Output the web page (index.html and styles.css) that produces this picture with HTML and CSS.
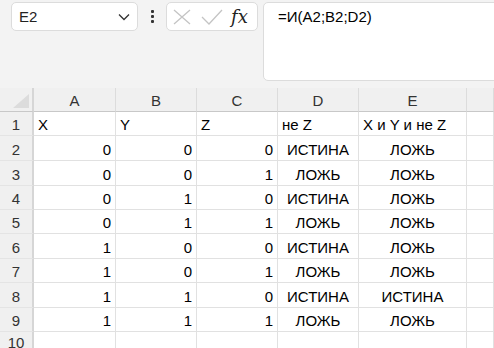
FILE: index.html
```html
<!DOCTYPE html>
<html lang="ru">
  <head>
    <meta charset="UTF-8" />
    <meta name="viewport" content="width=device-width, initial-scale=1.0" />
    <title>Sheet</title>
    <link rel="stylesheet" href="styles.css">
  </head>
  <body>
    <div id="formula-bar">
      <div class="name-box">
        <span>E2</span>
        <svg class="chevron" width="12" height="8" viewBox="0 0 12 8">
          <path d="M1 1.5 L6 6.5 L11 1.5" fill="none" stroke="#333" stroke-width="1.3" />
        </svg>
      </div>
      <div class="kebab"><i></i><i></i><i></i></div>
      <div class="fx-box">
        <svg width="18" height="16" viewBox="0 0 18 16">
          <path d="M1 1 L17 15 M17 1 L1 15" stroke="#c4c4c4" stroke-width="1.3" fill="none" />
        </svg>
        <svg width="22" height="16" viewBox="0 0 22 16">
          <path d="M1 8 L8 15 L21 1" stroke="#c4c4c4" stroke-width="1.3" fill="none" />
        </svg>
        <span class="fx">fx</span>
      </div>
      <div class="formula">=И(A2;B2;D2)</div>
    </div>

    <div id="sheet">
      <div class="corner"><span class="triangle"></span></div>
      <div class="col-head">A</div>
      <div class="col-head">B</div>
      <div class="col-head">C</div>
      <div class="col-head">D</div>
      <div class="col-head">E</div>
      <div class="col-head"></div>

      <div class="row-head">1</div>
      <div class="cell">X</div><div class="cell">Y</div><div class="cell">Z</div>
      <div class="cell">не Z</div><div class="cell">X и Y и не Z</div><div class="cell"></div>

      <div class="row-head">2</div>
      <div class="cell num">0</div><div class="cell num">0</div><div class="cell num">0</div>
      <div class="cell bool">ИСТИНА</div><div class="cell bool">ЛОЖЬ</div><div class="cell"></div>

      <div class="row-head">3</div>
      <div class="cell num">0</div><div class="cell num">0</div><div class="cell num">1</div>
      <div class="cell bool">ЛОЖЬ</div><div class="cell bool">ЛОЖЬ</div><div class="cell"></div>

      <div class="row-head">4</div>
      <div class="cell num">0</div><div class="cell num">1</div><div class="cell num">0</div>
      <div class="cell bool">ИСТИНА</div><div class="cell bool">ЛОЖЬ</div><div class="cell"></div>

      <div class="row-head">5</div>
      <div class="cell num">0</div><div class="cell num">1</div><div class="cell num">1</div>
      <div class="cell bool">ЛОЖЬ</div><div class="cell bool">ЛОЖЬ</div><div class="cell"></div>

      <div class="row-head">6</div>
      <div class="cell num">1</div><div class="cell num">0</div><div class="cell num">0</div>
      <div class="cell bool">ИСТИНА</div><div class="cell bool">ЛОЖЬ</div><div class="cell"></div>

      <div class="row-head">7</div>
      <div class="cell num">1</div><div class="cell num">0</div><div class="cell num">1</div>
      <div class="cell bool">ЛОЖЬ</div><div class="cell bool">ЛОЖЬ</div><div class="cell"></div>

      <div class="row-head">8</div>
      <div class="cell num">1</div><div class="cell num">1</div><div class="cell num">0</div>
      <div class="cell bool">ИСТИНА</div><div class="cell bool">ИСТИНА</div><div class="cell"></div>

      <div class="row-head">9</div>
      <div class="cell num">1</div><div class="cell num">1</div><div class="cell num">1</div>
      <div class="cell bool">ЛОЖЬ</div><div class="cell bool">ЛОЖЬ</div><div class="cell"></div>

      <div class="row-head">10</div>
      <div class="cell"></div><div class="cell"></div><div class="cell"></div>
      <div class="cell"></div><div class="cell"></div><div class="cell"></div>
    </div>
  </body>
</html>
```

FILE: styles.css
```css
* {
  margin: 0;
  padding: 0;
  box-sizing: border-box;
}

:root {
  --bg: #f3f3f3;
  --head-bg: #f0f0f0;
  --grid: #e1e1e1;
  --box-border: #dcdcdc;
}

body {
  width: 494px;
  height: 348px;
  overflow: hidden;
  background-color: var(--bg);
  font-family: "Liberation Sans", Arial, sans-serif;
  font-size: 15px;
  color: #000;
}

/* formula bar */
#formula-bar {
  display: flex;
  align-items: flex-start;
  height: 88px;
  padding-top: 2px;
}

.name-box {
  display: flex;
  align-items: center;
  justify-content: space-between;
  width: 127px;
  height: 29px;
  margin-left: 11px;
  padding: 0 7px 0 7px;
  background-color: #fff;
  border: 1px solid var(--box-border);
  border-radius: 5px;
  color: #222;
}

.kebab {
  display: flex;
  flex-direction: column;
  gap: 2px;
  width: 28px;
  height: 29px;
  align-items: center;
  justify-content: center;
}

.kebab i {
  display: block;
  width: 3px;
  height: 3px;
  border-radius: 1px;
  background-color: #333;
}

.fx-box {
  display: flex;
  align-items: center;
  gap: 10px;
  width: 92px;
  height: 29px;
  padding-left: 6px;
  background-color: #fff;
  border: 1px solid var(--box-border);
  border-radius: 5px;
}

.fx {
  font-family: "DejaVu Serif", "Liberation Serif", serif;
  font-style: italic;
  font-size: 18px;
  color: #222;
  margin-left: -2px;
}

.formula {
  flex: 1;
  height: 79px;
  margin-left: 5px;
  margin-right: -10px;
  padding: 5px 0 0 14px;
  background-color: #fff;
  border: 1px solid var(--box-border);
  border-radius: 5px;
}

/* sheet */
#sheet {
  display: grid;
  grid-template-columns: 34px 82px 81px 81px 81px 108px 1fr;
  grid-template-rows: 24px 24px 25px 25px 24px 24px 25px 24px 25px 24px 1fr;
  height: 260px;
  background-color: #fff;
}

.corner {
  position: relative;
  background-color: var(--head-bg);
  border-right: 2px solid #d6d6d6;
  border-bottom: 1px solid #c8c8c8;
}

.triangle {
  position: absolute;
  right: 3px;
  bottom: 3px;
  width: 0;
  height: 0;
  border-left: 16px solid transparent;
  border-bottom: 14px solid #dcdcdc;
}

.col-head {
  display: flex;
  align-items: center;
  justify-content: center;
  padding-top: 2px;
  background-color: var(--head-bg);
  border-right: 1px solid #dcdcdc;
  border-bottom: 1px solid #c8c8c8;
  color: #333;
}

.row-head {
  display: flex;
  align-items: center;
  justify-content: center;
  padding-top: 2px;
  background-color: var(--head-bg);
  border-right: 2px solid #d6d6d6;
  border-bottom: 1px solid #e4e4e4;
  color: #333;
}

.cell {
  display: flex;
  align-items: center;
  padding: 2px 4px 0 4px;
  border-right: 1px solid var(--grid);
  border-bottom: 1px solid var(--grid);
  white-space: nowrap;
}

.num {
  justify-content: flex-end;
}

.bool {
  justify-content: center;
}
```
